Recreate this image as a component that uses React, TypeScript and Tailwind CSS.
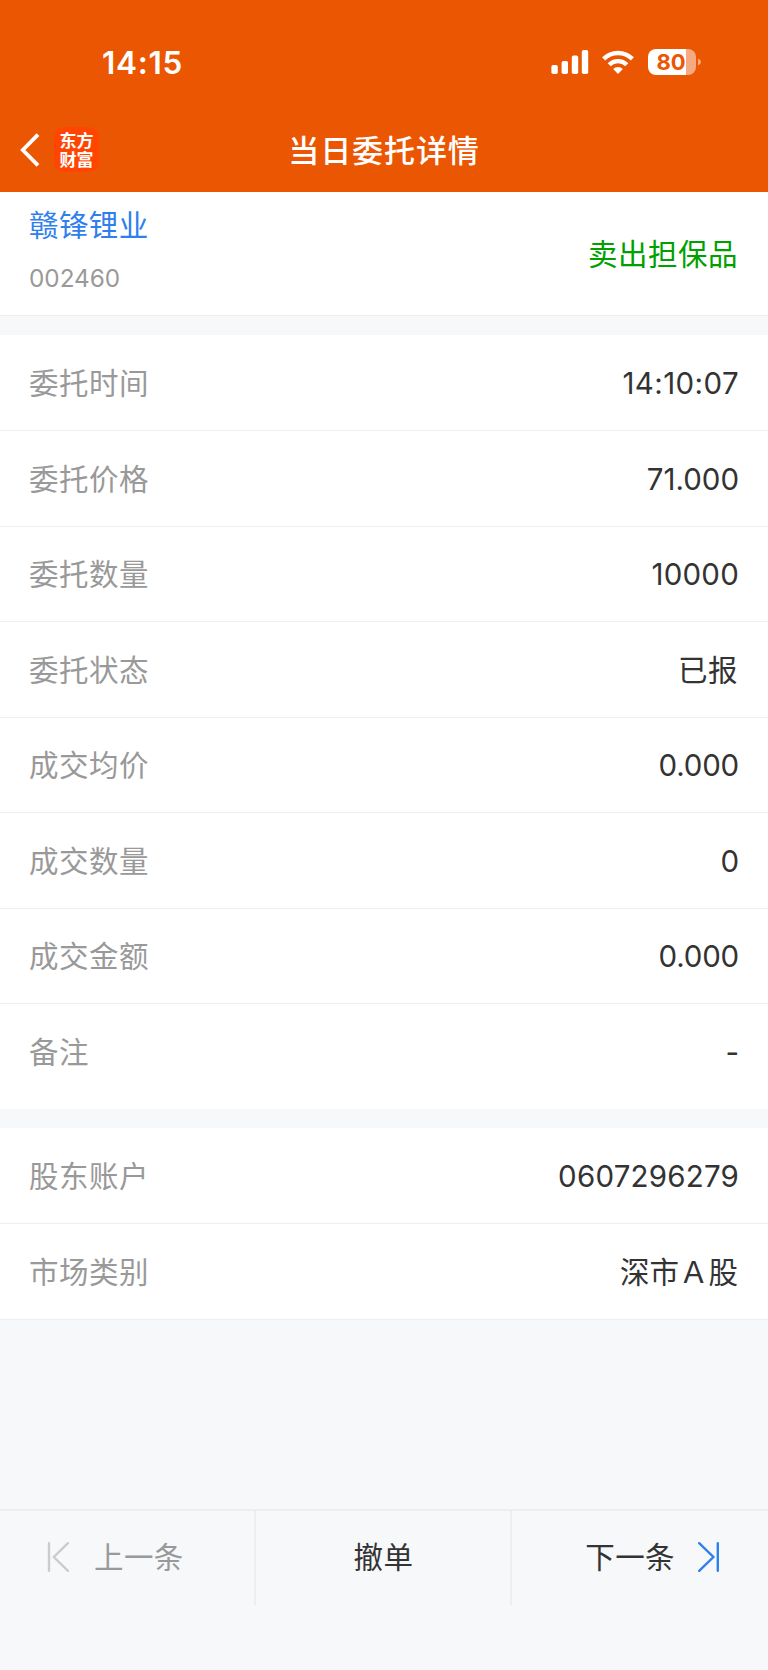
import { clsx } from "clsx";

type DetailItem = {
  label: string;
  value: string;
  valueClassName?: string;
};

const ORDER_ITEMS: DetailItem[] = [
  { label: "委托时间", value: "14:10:07", valueClassName: "tracking-[0.4px]" },
  { label: "委托价格", value: "71.000" },
  { label: "委托数量", value: "10000", valueClassName: "tracking-[0.2px]" },
  { label: "委托状态", value: "已报", valueClassName: "pr-px tracking-[0.5px]" },
  { label: "成交均价", value: "0.000", valueClassName: "tracking-[-0.2px]" },
  { label: "成交数量", value: "0" },
  { label: "成交金额", value: "0.000", valueClassName: "tracking-[-0.2px]" },
  { label: "备注", value: "-" },
];

const ACCOUNT_ITEMS: DetailItem[] = [
  { label: "股东账户", value: "0607296279", valueClassName: "tracking-[0.2px]" },
  { label: "市场类别", value: "深市Ａ股", valueClassName: "pr-px" },
];

const SignalIcon = () => (
  <svg width="38" height="24" viewBox="0 0 38 24" fill="#fff">
    <rect x="0.4" y="15" width="6.4" height="9" rx="1.8" />
    <rect x="10.6" y="11" width="6.4" height="13" rx="1.8" />
    <rect x="20.8" y="5.6" width="6.4" height="18.4" rx="1.8" />
    <rect x="30.8" y="0" width="6.4" height="24" rx="1.8" />
  </svg>
);

const WifiIcon = () => (
  <svg width="32" height="24" viewBox="0 0 32 24" fill="none" stroke="#fff" strokeWidth="4.4">
    <path d="M1.6 8.9a20.5 20.5 0 0 1 28.8 0" />
    <path d="M7.2 14.7a12.5 12.5 0 0 1 17.6 0" />
    <path d="M16 24l-4.8-4.9a6.8 6.8 0 0 1 9.6 0z" fill="#fff" stroke="none" />
  </svg>
);

const BatteryIcon = () => (
  <div className="flex items-center">
    <div className="flex h-[26px] w-12 items-center justify-center rounded-[8px] bg-[linear-gradient(90deg,#fff_38px,#f5aa81_38px)] pr-0.5 text-[22px] leading-none font-bold text-[#eb5602]">
      80
    </div>
    <svg width="4" height="8" viewBox="0 0 4 8" className="ml-0.5" fill="#f5aa81">
      <path d="M0 0.4Q3 1.6 3 4T0 7.6z" />
    </svg>
  </div>
);

const StatusBar = () => (
  <div className="flex h-[110px] items-start justify-between pt-[49px] pr-[66px] pl-[102px]">
    <span className="text-[31.5px] leading-7 font-semibold tracking-[0.7px] text-white">14:15</span>
    <div className="flex h-[26px] items-center">
      <SignalIcon />
      <div className="ml-[13px]">
        <WifiIcon />
      </div>
      <div className="ml-[14px]">
        <BatteryIcon />
      </div>
    </div>
  </div>
);

const NavBar = () => (
  <div className="grid h-[82px] grid-cols-3 items-center px-5">
    <div className="flex items-center pb-[3px]">
      <svg width="20" height="34" viewBox="0 0 20 34" fill="none" stroke="#fff" strokeWidth="3.8">
        <path d="M18 1.6L2.8 17 18 32.4" />
      </svg>
      <div className="ml-[14px] flex h-[45px] w-[45px] items-center justify-center rounded-[10px] bg-[#ff4500] pb-px font-['Noto_Sans_CJK_SC',sans-serif] text-[17px] leading-[19px] font-bold text-white">
        <p className="w-[34px]">东方财富</p>
      </div>
    </div>
    <h1 className="text-center text-[31px] leading-10 font-medium tracking-[0.9px] whitespace-nowrap text-white">
      当日委托详情
    </h1>
  </div>
);

const DetailRow = ({ item, last }: { item: DetailItem; last: boolean }) => (
  <div
    className={clsx(
      "flex h-[95.5px] items-center justify-between px-[29px] text-[29.5px] leading-10",
      !last && "border-b-[1.5px] border-[#eeeeee]"
    )}
  >
    <span className="tracking-[0.5px] text-[#999999]">{item.label}</span>
    <span className={clsx("text-[#333333]", item.valueClassName)}>{item.value}</span>
  </div>
);

const DetailList = ({ items, className }: { items: DetailItem[]; className?: string }) => (
  <section className={clsx("bg-white", className)}>
    {items.map((item, index) => (
      <DetailRow key={item.label} item={item} last={index === items.length - 1} />
    ))}
  </section>
);

const StockCard = () => (
  <section className="flex h-[124px] items-center justify-between border-b border-[#eeeeee] bg-white px-[29px]">
    <div className="flex flex-col pb-[5px]">
      <span className="text-[29.5px] leading-[42px] tracking-[0.4px] text-[#2f80ed]">赣锋锂业</span>
      <span className="mt-[11px] text-[24.3px] leading-[42px] text-[#999999]">002460</span>
    </div>
    <span className="pt-px pr-px text-[29.5px] leading-10 tracking-[0.5px] text-[#00a000]">卖出担保品</span>
  </section>
);

const Footer = () => (
  <footer className="mt-auto h-[161px] border-t-2 border-[#eeeeee]">
    <div className="grid h-[94px] grid-cols-3 text-[29.5px] leading-10 tracking-[0.4px] text-[#333333]">
      <button className="flex items-center border-r-2 border-[#eeeeee] pb-0.5 pl-[46px] text-[#999999]">
        <svg width="23" height="30" viewBox="0 0 23 30" fill="none" stroke="#cccccc" strokeWidth="2.4" strokeLinecap="round">
          <path d="M3 1.2v27.6M22 1.2L7.8 15 22 28.8" />
        </svg>
        <span className="ml-[25px]">上一条</span>
      </button>
      <button className="flex items-center justify-center border-r-2 border-[#eeeeee] pb-0.5 pl-px">撤单</button>
      <button className="flex items-center justify-end pr-[47px] pb-0.5">
        <span className="mr-[23px]">下一条</span>
        <svg width="23" height="30" viewBox="0 0 23 30" fill="none" stroke="#2f80ed" strokeWidth="2.4" strokeLinecap="round">
          <path d="M19.8 1.2v27.6M1.2 1.2L15.4 15 1.2 28.8" />
        </svg>
      </button>
    </div>
  </footer>
);

const App = () => {
  return (
    <div className="flex h-[1670px] w-[768px] flex-col overflow-hidden bg-[#f7f8fa] font-['Inter','Noto_Sans_CJK_SC',sans-serif]">
      <header className="h-48 bg-[#eb5602]">
        <StatusBar />
        <NavBar />
      </header>
      <main>
        <StockCard />
        <DetailList items={ORDER_ITEMS} className="mt-[19px] h-[774px] pt-[0.8px]" />
        <DetailList items={ACCOUNT_ITEMS} className="mt-[19px] h-48 border-b border-[#eeeeee] pt-[0.4px]" />
      </main>
      <Footer />
    </div>
  );
};

export default App;
